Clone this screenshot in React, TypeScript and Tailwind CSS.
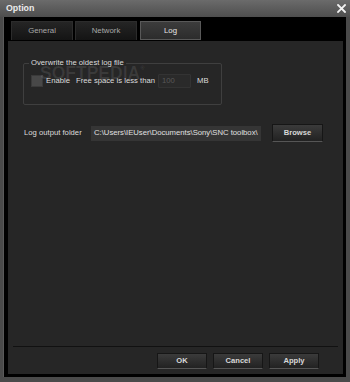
import React from "react";

const btn =
  "flex items-center justify-center bg-gradient-to-b from-[#3b3b3b] to-[#222222] border border-[#161616] border-b-[#565656] text-[#d8d8d8] font-bold text-[7.6px]";

export default function App() {
  return (
    <div className="w-[350px] h-[382px] bg-[#4a4a4a] flex flex-col font-['Liberation_Sans',Arial,sans-serif] overflow-hidden">
      {/* title bar */}
      <div className="h-[17px] shrink-0 bg-gradient-to-b from-[#6b6b6b] to-[#4e4e4e] flex items-center justify-between pl-[6px] pr-[4px]">
        <span className="text-[8.8px] font-bold text-[#ececec] leading-none">Option</span>
        <svg width="9" height="9" viewBox="0 0 9 9">
          <path d="M1 1 L8 8 M8 1 L1 8" stroke="#f2f2f2" strokeWidth="1.8" strokeLinecap="square" />
        </svg>
      </div>

      {/* body */}
      <div className="flex-1 ml-[3px] mr-[4px] mb-[5px] bg-black flex flex-col pl-[4px] pr-[3px] pt-[4px] pb-[3px] border-l border-[#5a5a5a]">
        {/* tabs */}
        <div className="h-[19px] shrink-0 flex ml-[3px] text-[7.8px]">
          <div className="w-[62px] flex items-center justify-center bg-gradient-to-b from-[#252525] to-[#141414] border border-[#2c2c2c] border-b-0 text-[#a8a8a8]">
            General
          </div>
          <div className="w-[62px] ml-[2px] flex items-center justify-center bg-gradient-to-b from-[#252525] to-[#141414] border border-[#2c2c2c] border-b-0 text-[#a8a8a8]">
            Network
          </div>
          <div className="w-[61px] ml-[3px] flex items-center justify-center bg-gradient-to-b from-[#3c3c3c] to-[#2c2c2c] border border-[#595959] text-[#e6e6e6]">
            Log
          </div>
        </div>

        {/* panel */}
        <div className="flex-1 mt-[1px] bg-[#262626] flex flex-col relative">
          {/* group box */}
          <div className="mt-[22px] ml-[15px] w-[199px] h-[42px] relative border border-[#3f3f3f] rounded-[2px]">
            <span className="absolute left-[5px] top-[-7px] px-[2px] bg-[#262626] text-[7.7px] leading-[12px] text-[#dcdcdc]">
              Overwrite the oldest log file
            </span>
            <div className="mt-[10px] ml-[7px] h-[14px] flex items-center text-[7.7px] text-[#dcdcdc]">
              <div className="w-[12px] h-[12px] bg-[#484848] border border-[#3a3a3a]" />
              <span className="ml-[3px]">Enable</span>
              <span className="ml-[6px]">Free space is less than</span>
              <div className="ml-[3px] w-[33px] h-[14px] bg-[#2a2a2a] border border-[#333333] rounded-[1px] flex items-center pl-[3px] text-[#585858]">
                100
              </div>
              <span className="ml-[6px]">MB</span>
            </div>
          </div>

          {/* log output folder */}
          <div className="mt-[19px] h-[18px] flex items-center text-[7.7px] text-[#dcdcdc]">
            <span className="ml-[16px] w-[67px]">Log output folder</span>
            <div className="w-[170px] h-[15px] bg-[#353535] flex items-center pl-[3px] overflow-hidden whitespace-nowrap text-[#e0e0e0]">
              C:\Users\IEUser\Documents\Sony\SNC toolbox\
            </div>
            <div className={btn + " ml-[11px] w-[51px] h-[18px]"}>Browse</div>
          </div>

          <div className="flex-1" />

          {/* separator */}
          <div className="mx-[5px] h-[1px] bg-[#111111]" />

          {/* buttons */}
          <div className="mt-[6px] mb-[5px] flex justify-end pr-[24px] gap-[6px]">
            <div className={btn + " w-[50px] h-[16px]"}>OK</div>
            <div className={btn + " w-[50px] h-[16px]"}>Cancel</div>
            <div className={btn + " w-[50px] h-[16px]"}>Apply</div>
          </div>

          {/* watermark */}
          <div className="absolute left-[32px] top-[24px] text-[17.5px] font-bold text-white/[0.09] leading-none pointer-events-none select-none">
            SOFTPEDIA<span className="text-[6px] align-top">®</span>
          </div>
        </div>
      </div>
    </div>
  );
}
